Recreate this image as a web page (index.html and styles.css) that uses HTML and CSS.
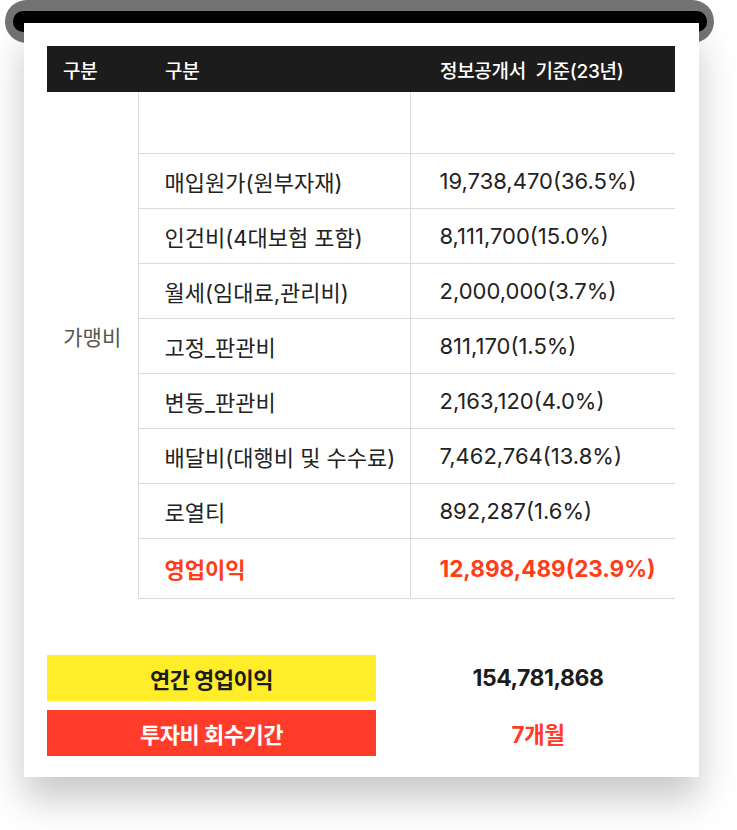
FILE: index.html
```html
<!DOCTYPE html>
<html lang="ko">
<head>
<meta charset="utf-8">
<link rel="stylesheet" href="styles.css">
</head>
<body>
<div class="page">
  <div class="topbar"><div class="slot"></div></div>
  <div class="card">
    <table class="cost">
      <thead>
        <tr><th class="c1">구분</th><th class="c2">구분</th><th class="c3">정보공개서&nbsp; 기준(23년)</th></tr>
      </thead>
      <tbody>
        <tr class="first"><td class="group" rowspan="9">가맹비</td><td class="c2"></td><td class="c3"></td></tr>
        <tr><td class="c2">매입원가(원부자재)</td><td class="c3">19,738,470(36.5%)</td></tr>
        <tr><td class="c2">인건비(4대보험 포함)</td><td class="c3">8,111,700(15.0%)</td></tr>
        <tr><td class="c2">월세(임대료,관리비)</td><td class="c3">2,000,000(3.7%)</td></tr>
        <tr><td class="c2">고정_판관비</td><td class="c3">811,170(1.5%)</td></tr>
        <tr><td class="c2">변동_판관비</td><td class="c3">2,163,120(4.0%)</td></tr>
        <tr><td class="c2">배달비(대행비 및 수수료)</td><td class="c3">7,462,764(13.8%)</td></tr>
        <tr><td class="c2">로열티</td><td class="c3">892,287(1.6%)</td></tr>
        <tr class="profit"><td class="c2">영업이익</td><td class="c3">12,898,489(23.9%)</td></tr>
      </tbody>
    </table>
    <div class="summary">
      <div class="label yellow">연간 영업이익</div>
      <div class="value">154,781,868</div>
      <div class="label red">투자비 회수기간</div>
      <div class="value red-text">7개월</div>
    </div>
  </div>
</div>
</body>
</html>
```

FILE: styles.css
```css
* { box-sizing: border-box; }
html, body { margin: 0; padding: 0; background: #fff; }
body { font-family: Inter, "Noto Sans CJK KR", sans-serif; color: #222; }

.page { width: 737px; height: 830px; }

.topbar {
  margin-left: 5px;
  width: 709px;
  height: 43px;
  border-radius: 22px;
  background: #737373;
  padding: 11px 7px 0 8px;
}
.slot {
  height: 21px;
  border-radius: 10px;
  background: #000;
}

.card {
  position: relative;
  margin-top: -20px;
  margin-left: 24px;
  width: 675px;
  height: 754px;
  background: #fff;
  box-shadow: 0 22px 36px rgba(0, 0, 0, 0.22);
  padding: 23px 24px 21px 23px;
}

.cost {
  width: 628px;
  border-collapse: collapse;
  table-layout: fixed;
}
.cost th {
  height: 46px;
  background: #1c1c1c;
  color: #fff;
  font-size: 19px;
  font-weight: 500;
  text-align: left;
  padding: 0;
  letter-spacing: -0.3px;
}
.cost th.c1 { width: 91px; padding-left: 16px; }
.cost th.c2 { width: 272px; padding-left: 27px; }
.cost th.c3 { padding-left: 30px; }

.cost td {
  height: 55px;
  padding: 0;
  font-size: 22px;
  font-weight: 400;
  color: #222;
  border-bottom: 1px solid #dadada;
}
.cost tr.first td { height: 61px; }
.cost tr.profit td { height: 60px; }
.cost td.group {
  border-bottom: none;
  border-right: 1px solid #dadada;
  text-align: center;
  color: #555;
  font-size: 21px;
  padding-bottom: 18px;
}
.cost td.c2 { padding-left: 26px; border-right: 1px solid #dadada; }
.cost td.c3 { padding-left: 29px; }
.cost tr.profit td { color: #ff3d17; font-weight: 700; }
.cost tr.profit td.c3 { font-size: 22.5px; }

.summary {
  margin-top: 56px;
  display: grid;
  grid-template-columns: 329px 1fr;
  column-gap: 25px;
  row-gap: 9px;
  width: 628px;
}
.label {
  height: 46px;
  display: flex;
  align-items: center;
  justify-content: center;
  font-size: 22px;
  font-weight: 700;
  letter-spacing: -0.5px;
}
.yellow { background: #ffed29; color: #1c1c1c; }
.red { background: #ff3c2a; color: #fff; }
.value {
  display: flex;
  align-items: center;
  justify-content: center;
  font-size: 23px;
  font-weight: 700;
  color: #1c1c1c;
  letter-spacing: -0.5px;
}
.red-text { color: #ff3c2a; font-size: 22.5px; }
```
